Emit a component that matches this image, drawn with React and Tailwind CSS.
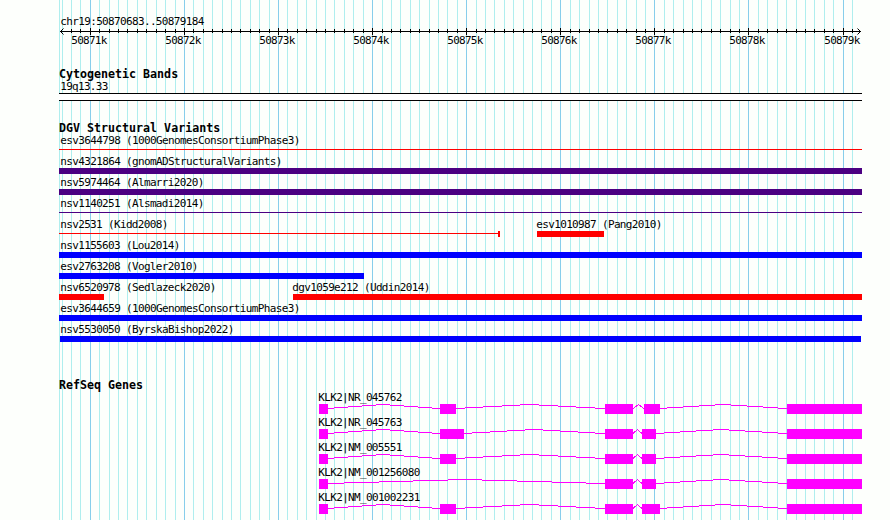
const majors = [90, 184, 278, 372, 466, 560, 654, 748, 843];

const ticks = [];
for (let n = -3; n <= 81; n++) {
  ticks.push({ x: Math.floor(90.328 + n * 9.4095), major: n % 10 === 0 });
}

const variantRows = [
  [{ name: 'esv3644798 (1000GenomesConsortiumPhase3)', x: 59, w: 803, fill: 'red', thin: true }],
  [{ name: 'nsv4321864 (gnomADStructuralVariants)', x: 59, w: 803, fill: 'indigo' }],
  [{ name: 'nsv5974464 (Almarri2020)', x: 59, w: 803, fill: 'indigo' }],
  [{ name: 'nsv1140251 (Alsmadi2014)', x: 59, w: 803, fill: 'indigo', thin: true }],
  [
    { name: 'nsv2531 (Kidd2008)', x: 59, w: 440, fill: 'red', thin: true, cap: true },
    { name: 'esv1010987 (Pang2010)', x: 537, w: 67, fill: 'red' },
  ],
  [{ name: 'nsv1155603 (Lou2014)', x: 59, w: 803, fill: 'blue' }],
  [{ name: 'esv2763208 (Vogler2010)', x: 59, w: 305, fill: 'blue' }],
  [
    { name: 'nsv6520978 (Sedlazeck2020)', x: 59, w: 45, fill: 'red' },
    { name: 'dgv1059e212 (Uddin2014)', x: 293, w: 569, fill: 'red' },
  ],
  [{ name: 'esv3644659 (1000GenomesConsortiumPhase3)', x: 59, w: 803, fill: 'blue' }],
  [{ name: 'nsv5530050 (ByrskaBishop2022)', x: 60, w: 801, fill: 'blue' }],
];

// exons as [start, width]
const genes = [
  { name: 'KLK2|NR_045762', exons: [[319, 9], [440, 16], [605, 28], [644, 16], [787, 75]] },
  { name: 'KLK2|NR_045763', exons: [[319, 9], [440, 24], [605, 28], [642, 14], [787, 75]] },
  { name: 'KLK2|NM_005551', exons: [[319, 9], [440, 16], [605, 28], [642, 14], [787, 75]] },
  { name: 'KLK2|NM_001256080', exons: [[319, 9], [605, 28], [642, 14], [787, 75]] },
  { name: 'KLK2|NM_001002231', exons: [[319, 9], [440, 16], [605, 28], [642, 18], [787, 75]] },
];

const fills = { red: '#ff0000', indigo: '#4b0082', blue: '#0000ff' };

const Label = ({ x, y, children }) => (
  <text x={x + 0.3} y={y} fontSize="11" textLength={children.length * 6} lengthAdjust="spacing">{children}</text>
);

const Grid = () => (
  <svg className="absolute inset-0" width="890" height="520" shapeRendering="crispEdges">
    <rect x="59" width="1" height="520" fill="#afeeee" />
    {ticks.map((t) => (
      <rect key={t.x} x={t.x} width="1" height="520" fill={t.major ? '#87ceeb' : '#afeeee'} />
    ))}
  </svg>
);

const Ruler = () => (
  <svg className="block" width="890" height="68">
    <Label x={60} y={25}>chr19:50870683..50879184</Label>
    <g shapeRendering="crispEdges">
      <rect x="60" y="31" width="801" height="1" />
      {ticks.slice(1).map((t) => (
        <rect key={t.x} x={t.x} y={t.major ? 28 : 29} width="1" height={t.major ? 7 : 4} />
      ))}
    </g>
    <path d="M63.5 28.5l-3 3 3 3M857.5 28.5l3 3-3 3" fill="none" stroke="black" />
    {majors.map((x, i) => (
      <Label key={x} x={x - 19} y={44}>{`${50871 + i}k`}</Label>
    ))}
  </svg>
);

const Heading = ({ children }) => (
  <h2 className="h-[13px] pl-[59px] text-[11.65px] leading-[13px] font-bold whitespace-pre">{children}</h2>
);

const VariantRow = ({ features }) => (
  <svg className="block" width="890" height="21">
    {features.map((f) => (
      <g key={f.name} fill={fills[f.fill]}>
        <g fill="black"><Label x={Math.max(60, f.x - 1)} y={9}>{f.name}</Label></g>
        <g shapeRendering="crispEdges">
          <rect x={f.x} y={f.thin ? 14 : 12} width={f.w} height={f.thin ? 1 : 6} />
          {f.cap && <rect x={f.x + f.w - 1} y="12" width="2" height="6" />}
        </g>
      </g>
    ))}
  </svg>
);

// stepped intron line that rises to the middle and falls back
const Intron = ({ from, to }) => {
  const w = to - from;
  if (w < 16) {
    const mid = Math.floor((from + to) / 2);
    return <path d={`M${from} 16.5L${mid + 0.5} 12.5L${to} 16.5`} fill="none" stroke="#ff00ff" shapeRendering="crispEdges" />;
  }
  const levels = [0, 1, 2, 3, 4, 3, 2, 1, 0];
  const edges = [0, 0.0575, 0.1825, 0.3075, 0.4325, 0.5575, 0.6825, 0.8075, 0.9325, 1];
  return levels.map((l, i) => {
    const a = Math.round(from + edges[i] * w);
    const b = Math.round(from + edges[i + 1] * w);
    return <rect key={i} x={a} y={16 - l} width={b - a} height="1" />;
  });
};

const Gene = ({ gene }) => (
  <svg className="block shrink-0" width="890" height="25">
    <Label x={318} y={9}>{gene.name}</Label>
    <g fill="#ff00ff" shapeRendering="crispEdges">
      {gene.exons.map(([x, w], i) => (
        <g key={x}>
          <rect x={x} y="12" width={w} height="10" />
          {i > 0 && <Intron from={gene.exons[i - 1][0] + gene.exons[i - 1][1]} to={x} />}
        </g>
      ))}
    </g>
  </svg>
);

const App = () => (
  <main className="relative h-[520px] w-[890px] overflow-hidden bg-[#fdfffc] font-['DejaVu_Sans_Mono',monospace] text-black">
    <Grid />
    <div className="relative flex flex-col">
      <Ruler />
      <section className="h-[54px]">
        <Heading>Cytogenetic Bands</Heading>
        <svg className="block" width="890" height="22">
          <Label x={60} y={9}>19q13.33</Label>
          <rect x="59" y="12" width="803" height="8" />
          <rect x="59" y="13" width="803" height="6" fill="white" />
        </svg>
      </section>
      <section className="h-[257px]">
        <Heading>DGV Structural Variants</Heading>
        {variantRows.map((row) => <VariantRow key={row[0].name} features={row} />)}
      </section>
      <section>
        <Heading>RefSeq Genes</Heading>
        {genes.map((g) => <Gene key={g.name} gene={g} />)}
      </section>
    </div>
  </main>
);

export default App;
